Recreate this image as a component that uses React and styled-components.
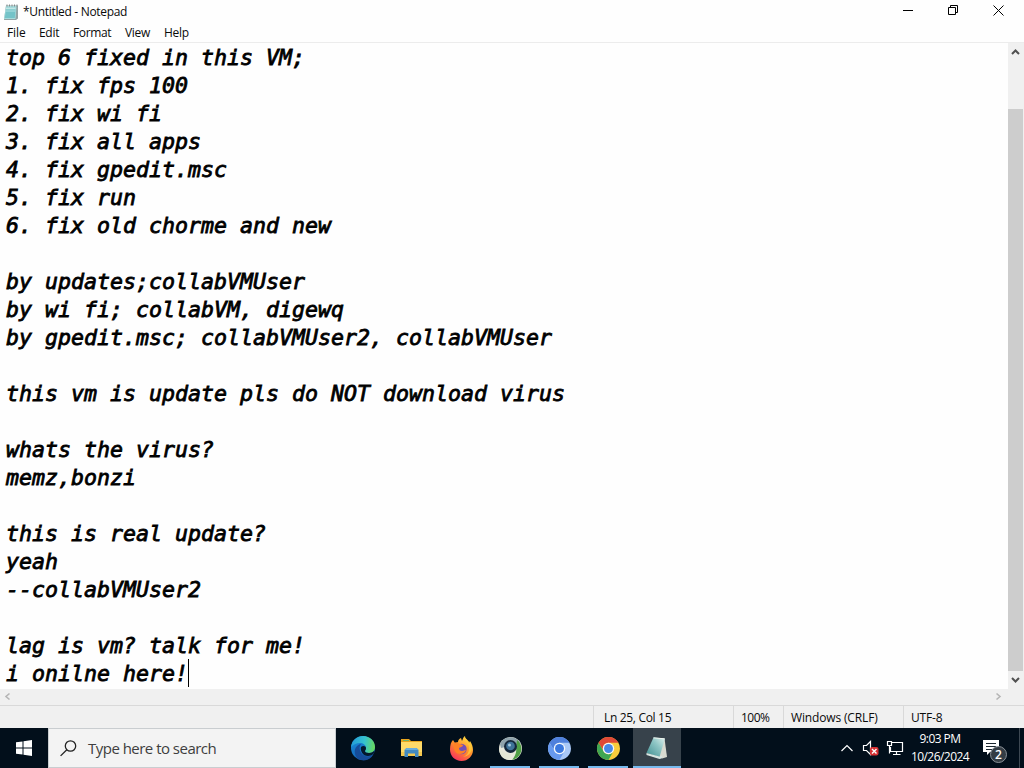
import styled, { createGlobalStyle } from "styled-components";

const colors = {
  text: "#0a0a0a",
  bar: "#f0f0f0",
  border: "#d9d9d9",
  thumb: "#cdcdcd",
  taskbar: "#020f1b",
  accent: "#76b9ed",
};

const GlobalStyle = createGlobalStyle`
  body {
    margin: 0;
    overflow: hidden;
    font-family: "Open Sans", "Noto Sans", sans-serif;
  }
  * {
    box-sizing: border-box;
  }
  svg {
    display: block;
    flex: none;
  }
`;

const Desktop = styled.div`
  display: flex;
  flex-direction: column;
  width: 1024px;
  height: 768px;
  background: #fefefe;
  color: ${colors.text};
`;

const TitleBar = styled.header`
  display: flex;
  align-items: center;
  height: 23px;
  padding: 0 3px;
`;

const Title = styled.span`
  flex: 1;
  margin-left: 4px;
  font-size: 12px;
  line-height: 22px;
  letter-spacing: -0.32px;
`;

const WindowButton = styled.div`
  display: flex;
  justify-content: center;
  align-items: center;
  width: 45px;
  height: 23px;
  padding-bottom: 2px;
`;

const MenuBar = styled.nav`
  display: flex;
  height: 20px;
  padding-left: 7px;
  border-bottom: 1px solid #ececec;
`;

const MenuItem = styled.span`
  width: ${({ $width }) => $width}px;
  font-size: 12px;
  line-height: 20px;
  letter-spacing: ${({ $spacing }) => $spacing}px;
  white-space: nowrap;
`;

const Editor = styled.main`
  display: flex;
  height: 646px;
`;

const Document = styled.div`
  flex: 1;
  padding-left: 6px;
  font-family: "DejaVu Sans Mono", monospace;
  font-size: 21.6px;
  font-style: italic;
  -webkit-text-stroke: 0.8px #000;
  color: #000;
`;

const Line = styled.div`
  display: flex;
  height: 28px;
  line-height: 30px;
  white-space: pre;
`;

const Caret = styled.span`
  width: 1px;
  height: 28px;
  background: #000;
`;

const VerticalScroll = styled.div`
  display: flex;
  flex-direction: column;
  align-items: flex-start;
  width: 16px;
  background: ${colors.bar};
`;

const ScrollArrow = styled.div`
  display: flex;
  justify-content: center;
  align-items: center;
  width: 15px;
  height: 17px;
`;

const Thumb = styled.div`
  width: 15px;
  height: 562px;
  margin-top: 49px;
  background: ${colors.thumb};
`;

const HorizontalScroll = styled.div`
  display: flex;
  justify-content: space-between;
  height: 16px;
  padding-right: 18px;
  background: ${colors.bar};

  & > div {
    height: 15px;
  }
`;

const StatusBar = styled.footer`
  display: flex;
  justify-content: flex-end;
  height: 23px;
  border-top: 1px solid ${colors.border};
  background: ${colors.bar};
`;

const StatusCell = styled.div`
  width: ${({ $width }) => $width}px;
  padding-left: ${({ $pad }) => $pad || 7}px;
  border-left: 1px solid ${colors.border};
  font-size: 12px;
  line-height: 23px;
  letter-spacing: ${({ $spacing }) => $spacing}px;
  white-space: nowrap;
`;

const Taskbar = styled.div`
  display: flex;
  height: 40px;
  background: ${colors.taskbar};
`;

const StartButton = styled.div`
  display: flex;
  justify-content: center;
  align-items: center;
  width: 48px;
`;

const SearchBox = styled.div`
  display: flex;
  align-items: center;
  width: 288px;
  padding-left: 11px;
  border: 1px solid #c9cdd0;
  background: #f3f3f3;
  color: #3e3e3e;
`;

const Placeholder = styled.span`
  margin-left: 11px;
  font-size: 15px;
  letter-spacing: -0.52px;
  white-space: nowrap;
`;

const Apps = styled.div`
  display: flex;
  gap: 1px;
  margin-left: 3px;
`;

const TaskbarApp = styled.div`
  display: flex;
  justify-content: center;
  align-items: center;
  width: 48px;
  height: 40px;
  background: ${({ $active }) => ($active ? "#37424b" : "transparent")};
  box-shadow: ${({ $active }) =>
    $active ? `inset 0 -2px ${colors.accent}` : "none"};
`;

const RunningApp = styled(TaskbarApp)`
  width: 40px;
  margin: 0 4px;
  box-shadow: inset 0 -2px ${colors.accent};
`;

const Tray = styled.div`
  display: flex;
  align-items: center;
  margin-left: auto;
  color: #fff;
`;

const Clock = styled.div`
  width: 70px;
  font-size: 12px;
  line-height: 18px;
  letter-spacing: -0.55px;
  text-align: center;
  white-space: nowrap;
`;

const Notifications = styled.div`
  position: relative;
  width: 25px;
  height: 40px;
  margin: 0 12px 0 7px;
  padding-top: 11px;
`;

const Badge = styled.span`
  position: absolute;
  top: 18px;
  left: 8px;
  width: 17px;
  height: 17px;
  border: 1px solid #8a9198;
  border-radius: 50%;
  background: #343d45;
  font-size: 12px;
  font-weight: 600;
  line-height: 15px;
  text-align: center;
`;

const ShowDesktop = styled.div`
  width: 5px;
  height: 40px;
  border-left: 1px solid #3d4852;
`;

const lines = [
  "top 6 fixed in this VM;",
  "1. fix fps 100",
  "2. fix wi fi",
  "3. fix all apps",
  "4. fix gpedit.msc",
  "5. fix run",
  "6. fix old chorme and new",
  "",
  "by updates;collabVMUser",
  "by wi fi; collabVM, digewq",
  "by gpedit.msc; collabVMUser2, collabVMUser",
  "",
  "this vm is update pls do NOT download virus",
  "",
  "whats the virus?",
  "memz,bonzi",
  "",
  "this is real update?",
  "yeah",
  "--collabVMUser2",
  "",
  "lag is vm? talk for me!",
  "i onilne here!",
];

const menu = [
  { label: "File", width: 32, spacing: -0.1 },
  { label: "Edit", width: 34, spacing: -0.3 },
  { label: "Format", width: 52, spacing: -0.35 },
  { label: "View", width: 39, spacing: -0.3 },
  { label: "Help", width: 40, spacing: -0.3 },
];

const status = [
  { label: "Ln 25, Col 15", width: 140, pad: 10, spacing: -0.32 },
  { label: "100%", width: 50, spacing: -0.5 },
  { label: "Windows (CRLF)", width: 120, spacing: -0.15 },
  { label: "UTF-8", width: 121, spacing: -0.15 },
];

const arrows = {
  up: "M1 7 L4.5 3.5 L8 7",
  down: "M1 3 L4.5 6.5 L8 3",
  left: "M6.5 1.5 L3 4.5 L6.5 7.5",
  right: "M2.5 1.5 L6 4.5 L2.5 7.5",
};

const Arrow = ({ direction, color = "#505050", width = 2 }) => (
  <svg width="9" height="9" fill="none" stroke={color} strokeWidth={width}>
    <path d={arrows[direction]} />
  </svg>
);

const NotepadSmall = () => (
  <svg width="16" height="18" viewBox="0 0 16 18">
    <path d="M3 2.500h12v13L13 17H1z" fill="#93a3a4" />
    <path d="M3 3h10.500l-1 13H1z" fill="#a5dadb" />
    <path d="M3 6.500h9.500L11.800 15H1.800z" fill="#74c3c8" />
    <path d="M2.500 5.500h10M2.300 8h10" stroke="#cdeced" strokeWidth=".7" />
    <path
      d="M4 1.500v2M6.500 1.500v2M9 1.500v2M11.500 1.500v2M14 1.500v2"
      stroke="#7d8b8c"
      strokeWidth="1"
    />
  </svg>
);

const EdgeIcon = () => (
  <svg width="26" height="26" viewBox="0 0 26 26">
    <defs>
      <linearGradient id="edgeTop" x1="0" y1=".4" x2="1" y2=".5">
        <stop offset="0" stopColor="#239bd8" />
        <stop offset=".55" stopColor="#35c2cf" />
        <stop offset="1" stopColor="#69d95b" />
      </linearGradient>
      <linearGradient id="edgeBody" x1="0" y1="0" x2=".5" y2="1">
        <stop offset="0" stopColor="#1b91dc" />
        <stop offset="1" stopColor="#1261b5" />
      </linearGradient>
    </defs>
    <circle cx="13" cy="13" r="12" fill="url(#edgeBody)" />
    <path
      d="M1 12C2 5 7 1 13 1c7 0 12 5 12 11 0 4-3 6-6 6-3 0-4-1-4-2 0-1 1-1 1-3 0-3-3-5-6-5-4 0-7 2-9 4z"
      fill="url(#edgeTop)"
    />
    <path
      d="M8 24C2 18 5 10 11 9c-3 4-1 10 4 12 3 1 6 0 8-1-3 5-9 7-15 4z"
      fill="#164c99"
    />
    <path
      d="M11 12c2-2 5-1 5 1 0 2-1 2-1 3 0 1 1 2 4 2 2 0 4-1 5-2 1 2-2 5-6 5-5 0-8-5-7-9z"
      fill="#04182c"
    />
  </svg>
);

const FolderIcon = () => (
  <svg width="24" height="20" viewBox="0 0 24 20">
    <path d="M1 1h8l2 2h11v5H1z" fill="#e9a51d" />
    <path d="M3 2h6v1H3z" fill="#70b36c" />
    <path d="M1 4h21v14H1z" fill="#ffda69" />
    <path d="M1 14h21v4H1z" fill="#f5c84f" />
    <path d="M4.500 12l2-2h10l2 2v7H15v-3.500H8V19H4.500z" fill="#438ac1" />
    <path d="M4.500 12l2-2h10l2 2z" fill="#69addc" />
  </svg>
);

const FirefoxIcon = () => (
  <svg width="25" height="25" viewBox="0 0 25 25">
    <defs>
      <linearGradient id="fox" x1=".8" y1="0" x2=".2" y2="1">
        <stop offset="0" stopColor="#ffe344" />
        <stop offset=".5" stopColor="#ff8a2c" />
        <stop offset="1" stopColor="#f72b62" />
      </linearGradient>
    </defs>
    <path
      d="M4 4l2 3 3-1c0-2 1-3 3-4l1 3c1-2 1-4 3-5 0 3 3 4 4 7l1-2c2 3 3 6 3 9 0 6-5 11-11.500 11S1 20 1 13.500C1 9 2 6 4 4z"
      fill="url(#fox)"
    />
    <circle cx="12.500" cy="13" r="5.200" fill="#7350b7" />
    <path
      d="M5 7c2-1 4 0 6 1l3 1c0 2-3 2-4 3 0 2 1 3 3 3 2 0 2-1 4-1-1 3-4 4-6 4-5 0-7-5-6-11z"
      fill="#ff8125"
    />
    <path
      d="M15 1c0 4 6 6 5 12 0 4-3 7-6 8 6-1 9-5 9-10-1-4-4-7-8-10z"
      fill="#ffcb38"
      opacity=".8"
    />
  </svg>
);

const GlobeIcon = () => (
  <svg width="25" height="25" viewBox="0 0 25 25">
    <circle cx="12.500" cy="12.500" r="11.500" fill="#e7e8dc" />
    <path d="M2 8C6-1 19-1 23 8L12 10 3 12z" fill="#8fa3ac" />
    <path d="M19 4c7 5 6 17-5 20 3-4 5-8 4-12z" fill="#4f9f46" />
    <path d="M1 12c3 4 7 6 12 6l-2 6C5 24 1 19 1 12z" fill="#e4e7d6" />
    <circle cx="12.500" cy="10.500" r="6.500" fill="#14273b" />
    <circle cx="12.500" cy="10" r="4.300" fill="#3e7299" />
    <circle cx="11.500" cy="9" r="1.500" fill="#a7cbe0" />
  </svg>
);

const ChromeIcon = ({ top, left, right, center }) => (
  <svg width="25" height="25" viewBox="0 0 24 24">
    <circle cx="12" cy="12" r="11" fill={right} />
    <path d="M2.470 6.500A11 11 0 0 1 21.530 6.500H12A5.500 5.500 0 0 0 7.240 14.750z" fill={top} />
    <path d="M2.470 6.500A11 11 0 0 0 12 23L16.760 14.750A5.500 5.500 0 0 1 7.240 14.750z" fill={left} />
    <circle cx="12" cy="12" r="5.500" fill="#f5f7fb" />
    <circle cx="12" cy="12" r="4.300" fill={center} />
  </svg>
);

const NotepadIcon = () => (
  <svg width="24" height="24" viewBox="0 0 24 24">
    <defs>
      <linearGradient id="note" x1="0" y1="1" x2="1" y2="0">
        <stop offset="0" stopColor="#3e8e91" />
        <stop offset=".6" stopColor="#8fc6c5" />
        <stop offset="1" stopColor="#e0f0ec" />
      </linearGradient>
    </defs>
    <path d="M19.500 2.500L22 21l-5 1.500-4-3z" fill="#d8dad0" />
    <path d="M8.500 1.500l11.500 1L14.500 21 1.500 17z" fill="url(#note)" />
    <path d="M1.500 17l13 3.500 3-1-1 3-2 .5-13-4z" fill="#d7e5e2" />
    <path d="M8.500 1.800l11 1" stroke="#eef4ee" />
  </svg>
);

const App = () => (
  <>
    <GlobalStyle />
    <Desktop>
      <TitleBar>
        <NotepadSmall />
        <Title>*Untitled - Notepad</Title>
        <WindowButton>
          <svg width="11" height="11" stroke="#000">
            <path d="M0 5.500h10" />
          </svg>
        </WindowButton>
        <WindowButton>
          <svg width="11" height="11" fill="none" stroke="#000">
            <path d="M.5 2.500h7v7h-7zM2.500 2.500v-2h7v7h-2" />
          </svg>
        </WindowButton>
        <WindowButton>
          <svg width="11" height="11" stroke="#000">
            <path d="M.5.5l10 10M10.500.5l-10 10" />
          </svg>
        </WindowButton>
      </TitleBar>
      <MenuBar>
        {menu.map(({ label, width, spacing }) => (
          <MenuItem key={label} $width={width} $spacing={spacing}>
            {label}
          </MenuItem>
        ))}
      </MenuBar>

      <Editor>
        <Document>
          {lines.map((line, index) => (
            <Line key={index}>
              {line}
              {index === lines.length - 1 && <Caret />}
            </Line>
          ))}
        </Document>
        <VerticalScroll>
          <ScrollArrow>
            <Arrow direction="up" />
          </ScrollArrow>
          <Thumb />
          <ScrollArrow>
            <Arrow direction="down" />
          </ScrollArrow>
        </VerticalScroll>
      </Editor>
      <HorizontalScroll>
        <ScrollArrow>
          <Arrow direction="left" color="#b5b5b5" width={1.6} />
        </ScrollArrow>
        <ScrollArrow>
          <Arrow direction="right" color="#b5b5b5" width={1.6} />
        </ScrollArrow>
      </HorizontalScroll>
      <StatusBar>
        {status.map(({ label, width, pad, spacing }) => (
          <StatusCell key={label} $width={width} $pad={pad} $spacing={spacing}>
            {label}
          </StatusCell>
        ))}
      </StatusBar>

      <Taskbar>
        <StartButton>
          <svg width="16" height="16" fill="#fff">
            <path d="M0 2.300L6.500 1.400V7.500H0zM7.500 1.200L16 0v7.500H7.500zM0 8.500h6.500v6.100L0 13.700zM7.500 8.500H16V16l-8.500-1.200z" />
          </svg>
        </StartButton>
        <SearchBox>
          <svg width="17" height="17" fill="none" stroke="#222" strokeWidth="1.300">
            <circle cx="10.500" cy="6" r="5.200" />
            <path d="M6.800 9.700L.6 15.900" />
          </svg>
          <Placeholder>Type here to search</Placeholder>
        </SearchBox>
        <Apps>
          <TaskbarApp>
            <EdgeIcon />
          </TaskbarApp>
          <TaskbarApp>
            <FolderIcon />
          </TaskbarApp>
          <TaskbarApp>
            <FirefoxIcon />
          </TaskbarApp>
          <RunningApp>
            <GlobeIcon />
          </RunningApp>
          <RunningApp>
            <ChromeIcon top="#4f80dc" left="#6799ee" right="#a9c8f7" center="#3b78df" />
          </RunningApp>
          <RunningApp>
            <ChromeIcon top="#df4937" left="#3fa653" right="#f8cc3c" center="#4788e6" />
          </RunningApp>
          <TaskbarApp $active>
            <NotepadIcon />
          </TaskbarApp>
        </Apps>
        <Tray>
          <svg width="70" height="20" viewBox="0 0 70 20" fill="none" stroke="#fff" strokeWidth="1.200">
            <path d="M6.500 13l5.500-5.500 5.500 5.500" />
            <path d="M28.500 7.500h3l4-4v13l-4-4h-3z" />
            <rect x="35" y="9" width="8.500" height="8.500" rx="2" fill="#d62f32" stroke="none" />
            <path d="M37 11l4.500 4.500M41.500 11L37 15.500" strokeWidth="1.400" />
            <path d="M57 4.500h10.500v9H55.500V9M61.500 13.500v3M58 16.500h7.500" />
            <path d="M52.500 3.500h4v4h-4zM54.500 7.500v8" />
          </svg>
          <Clock>
            <div>9:03 PM</div>
            <div>10/26/2024</div>
          </Clock>
          <Notifications>
            <svg width="18" height="17">
              <path d="M1 1h16v12H8l-3 3v-3H1z" fill="#fff" />
              <path d="M4 4.500h10M4 7.500h10M4 10.500h6" stroke="#1c2831" />
            </svg>
            <Badge>2</Badge>
          </Notifications>
          <ShowDesktop />
        </Tray>
      </Taskbar>
    </Desktop>
  </>
);

export default App;
